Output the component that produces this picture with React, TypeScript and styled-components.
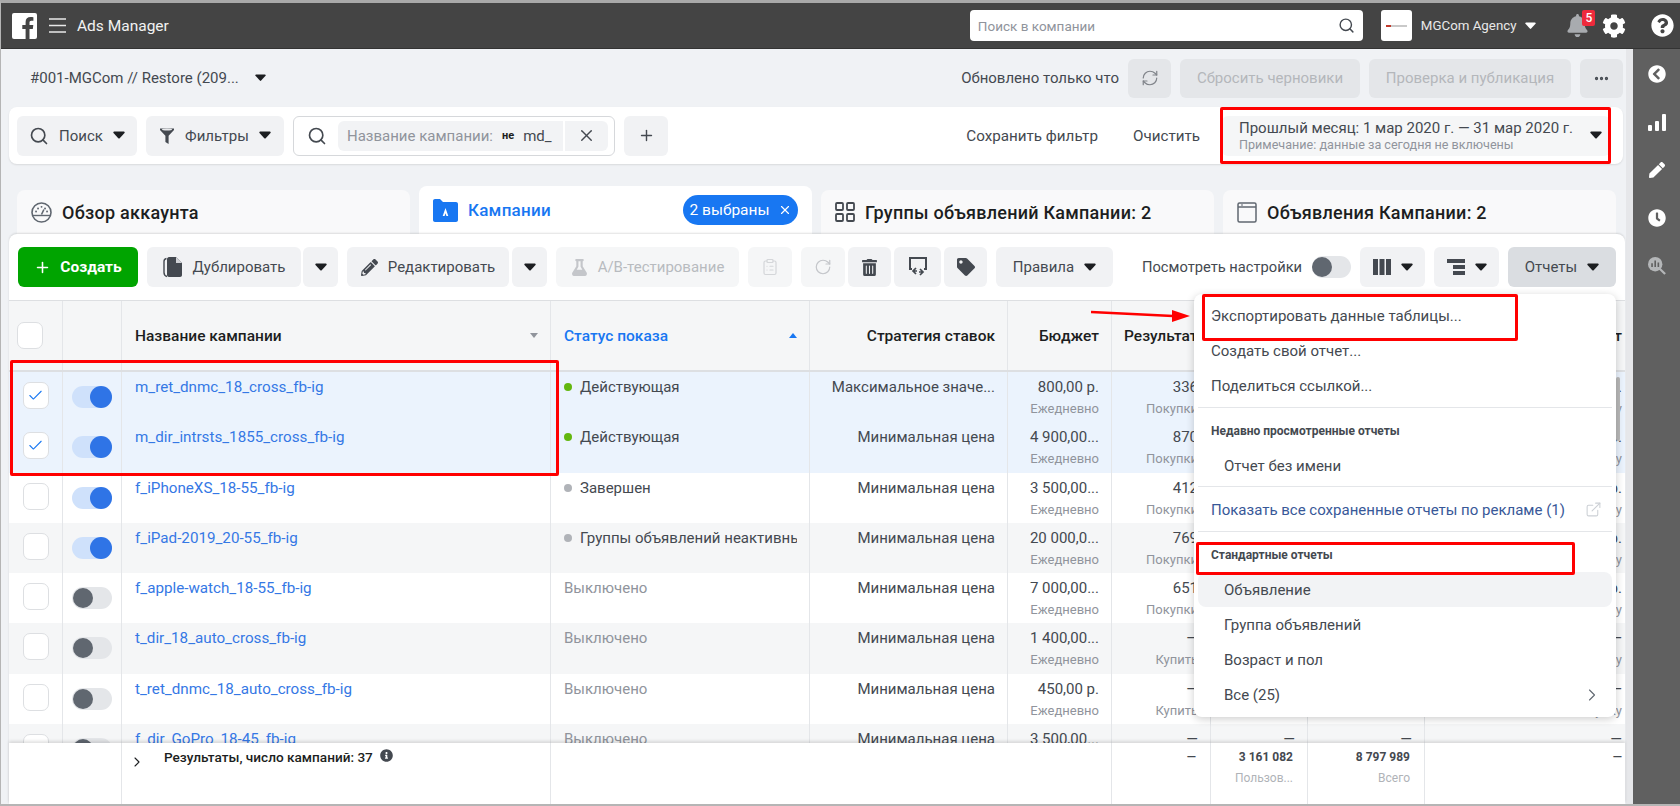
import React from 'react'
import styled, { createGlobalStyle } from 'styled-components'
import { FaBell, FaCog, FaQuestionCircle, FaChevronCircleLeft, FaPen, FaClock, FaTag, FaTrashAlt, FaFlask, FaInfoCircle, FaPencilAlt } from 'react-icons/fa'
import { Search, Plus, X, RefreshCw, RotateCw, ClipboardList, Check, ChevronRight, ExternalLink, Ellipsis } from 'lucide-react'

const GlobalStyle = createGlobalStyle`
    html, body {
        margin: 0;
        padding: 0;
        background: #f0f2f5;
    }
    * {
        box-sizing: border-box;
    }
    body {
        font-family: Roboto, "Noto Sans", sans-serif;
        font-size: 15px;
        color: #444950;
    }
`

const COLUMNS = '54px 59px 429px 259px 198px 104px 99px 97px 117px 200px'

type Row = {
    name: string
    status: string
    dot?: string
    strategy: string
    budget: string
    result: string
    resultSub: string
    selected?: boolean
    on?: boolean
    striped?: boolean
    reach: string
    shows: string
    cost: string
}

const rows: Row[] = [
    { name: 'm_ret_dnmc_18_cross_fb-ig', status: 'Действующая', dot: '#63b70f', strategy: 'Максимальное значе...', budget: '800,00 р.', result: '336', resultSub: 'Покупки', selected: true, on: true, reach: '142 310', shows: '402 118', cost: '92,10 р.' },
    { name: 'm_dir_intrsts_1855_cross_fb-ig', status: 'Действующая', dot: '#63b70f', strategy: 'Минимальная цена', budget: '4 900,00...', result: '870', resultSub: 'Покупки', selected: true, on: true, reach: '351 204', shows: '908 221', cost: '75,40 р.' },
    { name: 'f_iPhoneXS_18-55_fb-ig', status: 'Завершен', dot: '#b0b3b8', strategy: 'Минимальная цена', budget: '3 500,00...', result: '412', resultSub: 'Покупки', on: true, reach: '188 540', shows: '511 036', cost: '81,25 р.' },
    { name: 'f_iPad-2019_20-55_fb-ig', status: 'Группы объявлений неактивны', dot: '#b0b3b8', strategy: 'Минимальная цена', budget: '20 000,0...', result: '769', resultSub: 'Покупки', on: true, striped: true, reach: '240 917', shows: '733 402', cost: '64,80 р.' },
    { name: 'f_apple-watch_18-55_fb-ig', status: 'Выключено', strategy: 'Минимальная цена', budget: '7 000,00...', result: '651', resultSub: 'Покупки', reach: '97 330', shows: '285 640', cost: '70,15 р.' },
    { name: 't_dir_18_auto_cross_fb-ig', status: 'Выключено', strategy: 'Минимальная цена', budget: '1 400,00...', result: '—', resultSub: 'Купить', striped: true, reach: '—', shows: '—', cost: '—' },
    { name: 't_ret_dnmc_18_auto_cross_fb-ig', status: 'Выключено', strategy: 'Минимальная цена', budget: '450,00 р.', result: '—', resultSub: 'Купить', reach: '—', shows: '—', cost: '—' },
    { name: 'f_dir_GoPro_18-45_fb-ig', status: 'Выключено', strategy: 'Минимальная цена', budget: '3 500,00...', result: '—', resultSub: 'Купить', striped: true, reach: '—', shows: '—', cost: '—' },
]

function Caret({ color = '#1c1e21', size = 12 }: { color?: string; size?: number }) {
    return (
        <svg width={size} height={size * 0.67} viewBox="0 0 12 8" style={{ flex: 'none' }}>
            <path d="M1.2 0.5h9.6c.8 0 1.2.9.7 1.5L6.7 7.2c-.4.4-1 .4-1.4 0L.5 2C0 1.4.4.5 1.2.5z" fill={color} />
        </svg>
    )
}

function FbLogo() {
    return (
        <svg width="25" height="26" viewBox="0 0 25 26">
            <rect width="25" height="26" rx="2" fill="#fff" />
            <path d="M17.5 26V16h3.3l.5-3.9h-3.8V9.7c0-1.1.4-1.9 1.9-1.9h2V4.3c-.4 0-1.6-.2-2.9-.2-2.9 0-4.9 1.8-4.9 5v3h-3.3V16h3.3v10z" fill="#444" />
        </svg>
    )
}

function Burger() {
    return (
        <svg width="17" height="15" viewBox="0 0 17 15">
            <path d="M0 1h17M0 7.5h17M0 14h17" stroke="#e8e8e8" strokeWidth="1.5" />
        </svg>
    )
}

function Funnel() {
    return (
        <svg width="16" height="18" viewBox="0 0 16 18">
            <path d="M1 1.5h14v1.6L9.6 8.8V17l-3.2-2V8.8L1 3.1z" fill="#444950" />
            <ellipse cx="8" cy="2.6" rx="5" ry="1" fill="#e8e9eb" />
        </svg>
    )
}

function GaugeIcon() {
    return (
        <svg width="21" height="21" viewBox="0 0 21 21" fill="none">
            <circle cx="10.5" cy="10.5" r="9.5" stroke="#606770" strokeWidth="1.6" />
            <path d="M1.5 13.5h18" stroke="#606770" strokeWidth="1.4" />
            <path d="M10.5 12.5l2.4-5" stroke="#606770" strokeWidth="1.6" />
            <path d="M5 9.500h.1M7 6.500h.1M10.500 4.800h.1M14 6.500h.1M16 9.500h.1" stroke="#606770" strokeWidth="1.8" strokeLinecap="round" />
        </svg>
    )
}

function FolderIcon() {
    return (
        <svg width="25" height="23" viewBox="0 0 25 23">
            <path d="M0 2c0-1.100.9-2 2-2h5l3 3h13c1.100 0 2 .9 2 2v16c0 1.100-.9 2-2 2H2c-1.100 0-2-.9-2-2z" fill="#1877f2" />
            <path d="M12.500 9l2.800 8h-1.900l-.9-2.800-.9 2.800H9.700z" fill="#fff" />
        </svg>
    )
}

function GroupsIcon() {
    return (
        <svg width="20" height="20" viewBox="0 0 20 20" fill="none" stroke="#444950" strokeWidth="1.800">
            <rect x="1" y="1" width="7" height="7" rx="1" />
            <rect x="12" y="1" width="7" height="7" rx="1" />
            <rect x="1" y="12" width="7" height="7" rx="1" />
            <rect x="12" y="12" width="7" height="7" rx="1" />
        </svg>
    )
}

function AdIcon() {
    return (
        <svg width="20" height="21" viewBox="0 0 20 21" fill="none" stroke="#606770" strokeWidth="1.500">
            <rect x="1" y="1" width="18" height="19" rx="1.500" />
            <path d="M1 5h18" />
            <path d="M4 3h2" strokeWidth="1" />
        </svg>
    )
}

function CopyIcon() {
    return (
        <svg width="20" height="22" viewBox="0 0 20 22">
            <path d="M3.500 2.500C1.500 3 1 4 1 5.500v11c0 2 1 3.500 3 4" fill="none" stroke="#444950" strokeWidth="1.400" />
            <path d="M6 1h7l6 6v12c0 1-.8 2-2 2H6c-1 0-2-1-2-2V3c0-1 1-2 2-2z" fill="#444950" />
            <path d="M13 1v6h6" fill="#d0d2d6" />
        </svg>
    )
}

function SwapIcon() {
    return (
        <svg width="20" height="22" viewBox="0 0 20 22" fill="none" stroke="#444950" strokeWidth="2">
            <path d="M4 13H2V2h16v11h-2" />
            <path d="M8 12l-3 3 3 3M5 15h4M12 13l3 3-3 3M15 16h-4" strokeWidth="1.700" />
        </svg>
    )
}

function ColumnsIcon() {
    return (
        <svg width="18" height="18" viewBox="0 0 18 18" fill="#444950">
            <rect x="0" y="1" width="5" height="16" />
            <rect x="6.500" y="1" width="5" height="16" />
            <rect x="13" y="1" width="5" height="16" />
        </svg>
    )
}

function BreakdownIcon() {
    return (
        <svg width="18" height="18" viewBox="0 0 18 18" fill="#444950">
            <rect x="0" y="1" width="18" height="4" />
            <rect x="6" y="7" width="12" height="4" />
            <rect x="6" y="13" width="12" height="4" />
        </svg>
    )
}

function BarsIcon() {
    return (
        <svg width="18" height="17" viewBox="0 0 18 17" fill="#fff">
            <rect x="0" y="11" width="4" height="6" rx="1" />
            <rect x="7" y="7" width="4" height="10" rx="1" />
            <rect x="14" y="0" width="4" height="17" rx="1" />
        </svg>
    )
}

function ReportSearchIcon() {
    return (
        <svg width="18" height="18" viewBox="0 0 20 20">
            <circle cx="8" cy="8" r="8" fill="#b4b6b8" />
            <path d="M4.500 7v4M8 4v7M11.500 6v5" stroke="#606060" strokeWidth="1.800" />
            <path d="M13 13l6 6" stroke="#b4b6b8" strokeWidth="2.400" />
        </svg>
    )
}

function RedArrow() {
    return (
        <svg width="100" height="14" viewBox="0 0 100 14">
            <path d="M0 2l82 4" stroke="#f00" strokeWidth="2.500" />
            <path d="M81 0l18 6-18 6z" fill="#f00" />
        </svg>
    )
}

export default function App() {
    return (
        <Window>
            <GlobalStyle />
            <TopBar>
                <FbLogo />
                <BurgerWrap>
                    <Burger />
                </BurgerWrap>
                <AppTitle>Ads Manager</AppTitle>
                <CompanySearch>
                    <span>Поиск в компании</span>
                    <Search size={17} color="#444950" strokeWidth={2} />
                </CompanySearch>
                <AgencyLogo>
                    <i />
                </AgencyLogo>
                <AgencyName>MGCom Agency</AgencyName>
                <Caret color="#fff" size={11} />
                <BellWrap>
                    <FaBell size={23} color="#a8abaf" />
                    <Badge>5</Badge>
                </BellWrap>
                <FaCog size={24} color="#fff" />
                <HelpWrap>
                    <FaQuestionCircle size={23} color="#fff" />
                </HelpWrap>
            </TopBar>

            <Body>
                <Workspace>
                    <AccountRow>
                        <AccountName>#001-MGCom // Restore (209...</AccountName>
                        <Caret size={11} />
                        <AccountActions>
                            <UpdatedText>Обновлено только что</UpdatedText>
                            <DisabledButton $w={43}>
                                <RefreshCw size={18} color="#80848a" strokeWidth={1.6} />
                            </DisabledButton>
                            <DisabledButton $w={180}>Сбросить черновики</DisabledButton>
                            <DisabledButton $w={202}>Проверка и публикация</DisabledButton>
                            <DisabledButton $w={43}>
                                <Ellipsis size={17} color="#444950" strokeWidth={2.6} />
                            </DisabledButton>
                        </AccountActions>
                    </AccountRow>

                    <FilterCard>
                        <ToolButton $w={120}>
                            <Search size={20} color="#444950" strokeWidth={2} />
                            Поиск
                            <Caret />
                        </ToolButton>
                        <ToolButton $w={138}>
                            <Funnel />
                            Фильтры
                            <Caret />
                        </ToolButton>
                        <FilterInput>
                            <Search size={20} color="#444950" strokeWidth={2} />
                            <Token>
                                <TokenLabel>Название кампании:</TokenLabel>
                                <TokenOp>не</TokenOp>
                                <TokenValue>md_</TokenValue>
                            </Token>
                            <TokenClose>
                                <X size={19} color="#444950" strokeWidth={1.8} />
                            </TokenClose>
                        </FilterInput>
                        <ToolButton $w={44}>
                            <Plus size={17} color="#444950" strokeWidth={2} />
                        </ToolButton>
                        <FilterLinks>
                            <span>Сохранить фильтр</span>
                            <span>Очистить</span>
                        </FilterLinks>
                        <DateBox>
                            <div>
                                <DateMain>Прошлый месяц: 1 мар 2020 г. — 31 мар 2020 г.</DateMain>
                                <DateNote>Примечание: данные за сегодня не включены</DateNote>
                            </div>
                            <Caret />
                        </DateBox>
                    </FilterCard>

                    <Tabs>
                        <Tab>
                            <GaugeIcon />
                            Обзор аккаунта
                        </Tab>
                        <Tab $active>
                            <FolderIcon />
                            Кампании
                            <Chip>
                                2 выбраны
                                <X size={14} color="#fff" strokeWidth={2} />
                            </Chip>
                        </Tab>
                        <Tab>
                            <GroupsIcon />
                            Группы объявлений Кампании: 2
                        </Tab>
                        <Tab>
                            <AdIcon />
                            Объявления Кампании: 2
                        </Tab>
                    </Tabs>

                    <MainCard>
                        <Toolbar>
                            <CreateButton>
                                <Plus size={17} color="#fff" strokeWidth={2.2} />
                                Создать
                            </CreateButton>
                            <JoinedGroup $gap={2}>
                                <ToolButton $w={154}>
                                    <CopyIcon />
                                    Дублировать
                                </ToolButton>
                                <ToolButton $w={35}>
                                    <Caret />
                                </ToolButton>
                            </JoinedGroup>
                            <JoinedGroup $gap={3}>
                                <ToolButton $w={162}>
                                    <FaPencilAlt size={17} color="#444950" />
                                    Редактировать
                                </ToolButton>
                                <ToolButton $w={35}>
                                    <Caret />
                                </ToolButton>
                            </JoinedGroup>
                            <ToolButton $w={183} $off>
                                <FaFlask size={17} color="#c4c6ca" />
                                A/B-тестирование
                            </ToolButton>
                            <ToolButton $w={44} $off>
                                <ClipboardList size={18} color="#d4d6d9" strokeWidth={1.6} />
                            </ToolButton>
                            <JoinedGroup $gap={3}>
                                <ToolButton $w={44} $off>
                                    <RotateCw size={18} color="#c4c6ca" strokeWidth={1.6} />
                                </ToolButton>
                                <ToolButton $w={43}>
                                    <FaTrashAlt size={17} color="#444950" />
                                </ToolButton>
                                <ToolButton $w={47}>
                                    <SwapIcon />
                                </ToolButton>
                                <ToolButton $w={43}>
                                    <FaTag size={18} color="#444950" />
                                </ToolButton>
                            </JoinedGroup>
                            <ToolButton $w={117}>
                                Правила
                                <Caret />
                            </ToolButton>
                            <ViewLabel>Посмотреть настройки</ViewLabel>
                            <ViewToggle>
                                <i />
                            </ViewToggle>
                            <ToolButton $w={65}>
                                <ColumnsIcon />
                                <Caret />
                            </ToolButton>
                            <ToolButton $w={65}>
                                <BreakdownIcon />
                                <Caret />
                            </ToolButton>
                            <ReportsButton>
                                Отчеты
                                <Caret />
                            </ReportsButton>
                        </Toolbar>

                        <TableHead>
                            <HeadCell $center>
                                <CheckBox />
                            </HeadCell>
                            <HeadCell />
                            <HeadCell $between>
                                Название кампании
                                <SortMark $color="#90949c" />
                            </HeadCell>
                            <HeadCell $between $blue>
                                Статус показа
                                <SortMark $color="#1877f2" $up />
                            </HeadCell>
                            <HeadCell $right>Стратегия ставок</HeadCell>
                            <HeadCell $right>Бюджет</HeadCell>
                            <HeadCell $right $flush>
                                Результаты
                            </HeadCell>
                            <HeadCell $right>Охват</HeadCell>
                            <HeadCell $right>Показы</HeadCell>
                            <HeadCell $right $last>
                                Цена за результат
                            </HeadCell>
                        </TableHead>

                        <TableBody>
                            {rows.map((row) => (
                                <TableRow key={row.name} $selected={row.selected} $striped={row.striped}>
                                    <Cell $center>
                                        <CheckBox>{row.selected && <Check size={17} color="#1877f2" strokeWidth={1.5} />}</CheckBox>
                                    </Cell>
                                    <Cell $center>
                                        <Toggle $on={row.on}>
                                            <i />
                                        </Toggle>
                                    </Cell>
                                    <Cell>
                                        <CampaignLink>{row.name}</CampaignLink>
                                    </Cell>
                                    <Cell>
                                        <StatusLine $muted={!row.dot}>
                                            {row.dot && <Dot $color={row.dot} />}
                                            {row.status}
                                        </StatusLine>
                                    </Cell>
                                    <Cell $right>
                                        <MainValue>{row.strategy}</MainValue>
                                    </Cell>
                                    <Cell $right>
                                        <MainValue>{row.budget}</MainValue>
                                        <SubValue>Ежедневно</SubValue>
                                    </Cell>
                                    <Cell $right>
                                        <MainValue>{row.result}</MainValue>
                                        <SubValue>{row.resultSub}</SubValue>
                                    </Cell>
                                    <Cell $right>
                                        <MainValue>{row.reach}</MainValue>
                                    </Cell>
                                    <Cell $right>
                                        <MainValue>{row.shows}</MainValue>
                                    </Cell>
                                    <Cell $right $last>
                                        <MainValue>{row.cost}</MainValue>
                                        <SubValue>За покупку</SubValue>
                                    </Cell>
                                </TableRow>
                            ))}
                            <ScrollThumb />
                        </TableBody>

                        <TableFoot>
                            <FootCell $span={2} />
                            <FootCell $summary>
                                <FootChevron>
                                    <ChevronRight size={16} color="#1c1e21" strokeWidth={1.6} />
                                </FootChevron>
                                <SummaryText>Результаты, число кампаний: 37</SummaryText>
                                <FaInfoCircle size={13} color="#444950" />
                            </FootCell>
                            <FootCell $span={3} />
                            <FootCell>
                                <FootValue>—</FootValue>
                            </FootCell>
                            <FootCell>
                                <FootValue>3 161 082</FootValue>
                                <FootSub>Пользов...</FootSub>
                            </FootCell>
                            <FootCell>
                                <FootValue>8 797 989</FootValue>
                                <FootSub>Всего</FootSub>
                            </FootCell>
                            <FootCell $last>
                                <FootValue>—</FootValue>
                            </FootCell>
                        </TableFoot>
                    </MainCard>
                </Workspace>

                <SideRail>
                    <RailSlot>
                        <FaChevronCircleLeft size={18} color="#fff" />
                    </RailSlot>
                    <RailSlot>
                        <BarsIcon />
                    </RailSlot>
                    <RailSlot>
                        <FaPen size={16} color="#fff" />
                    </RailSlot>
                    <RailSlot>
                        <FaClock size={18} color="#fff" />
                    </RailSlot>
                    <RailSlot>
                        <ReportSearchIcon />
                    </RailSlot>
                </SideRail>
            </Body>

            <ReportsMenu>
                <MenuItem>Экспортировать данные таблицы...</MenuItem>
                <MenuItem>Создать свой отчет...</MenuItem>
                <MenuItem>Поделиться ссылкой...</MenuItem>
                <MenuDivider />
                <MenuHeading>Недавно просмотренные отчеты</MenuHeading>
                <MenuItem $indent>Отчет без имени</MenuItem>
                <MenuDivider $tight />
                <MenuLink>
                    Показать все сохраненные отчеты по рекламе (1)
                    <ExternalLink size={17} color="#ccd0d5" strokeWidth={1.5} />
                </MenuLink>
                <MenuDivider />
                <MenuHeading>Стандартные отчеты</MenuHeading>
                <MenuItem $indent $hover>
                    Объявление
                </MenuItem>
                <MenuItem $indent>Группа объявлений</MenuItem>
                <MenuItem $indent>Возраст и пол</MenuItem>
                <MenuItem $indent $between>
                    Все (25)
                    <ChevronRight size={20} color="#606770" strokeWidth={1.3} />
                </MenuItem>
            </ReportsMenu>

            <RedBox $x={1220} $y={107} $w={391} $h={57} />
            <RedBox $x={10} $y={360} $w={549} $h={116} />
            <RedBox $x={1202} $y={294} $w={316} $h={47} />
            <RedBox $x={1196} $y={542} $w={379} $h={33} />
            <ArrowSpot>
                <RedArrow />
            </ArrowSpot>
        </Window>
    )
}

const Window = styled.div`
    position: relative;
    width: 1680px;
    height: 806px;
    overflow: hidden;
    display: flex;
    flex-direction: column;
    background: #f0f2f5;
    border-top: 3px solid #a9a9a9;
    border-left: 1px solid #b5b5b5;
    border-bottom: 2px solid #b5b5b5;
`

const TopBar = styled.header`
    flex: none;
    height: 46px;
    background: #444;
    border-bottom: 1px solid #333;
    display: flex;
    align-items: center;
    padding-left: 11px;
    color: #fff;
`

const BurgerWrap = styled.div`
    display: flex;
    margin-left: 12px;
`

const AppTitle = styled.div`
    margin-left: 11px;
    font-size: 15.5px;
    font-weight: 400;
    color: #f2f2f2;
`

const CompanySearch = styled.div`
    margin-left: 801px;
    width: 393px;
    height: 31px;
    background: #fff;
    border-radius: 4px;
    display: flex;
    align-items: center;
    justify-content: space-between;
    padding: 0 8px 0 8px;
    font-size: 13.5px;
    color: #90949c;
`

const AgencyLogo = styled.div`
    margin-left: 18px;
    width: 31px;
    height: 31px;
    background: #fff;
    border-radius: 3px;
    display: flex;
    align-items: center;
    justify-content: center;

    i {
        display: block;
        width: 21px;
        height: 2px;
        background: linear-gradient(90deg, #c0392b 0 22%, #c9c9c9 22%);
    }
`

const AgencyName = styled.div`
    margin: 0 9px;
    font-size: 13.3px;
    font-weight: 400;
    color: #e8e8e8;
`

const BellWrap = styled.div`
    position: relative;
    display: flex;
    margin: 0 13px 0 30px;
`

const Badge = styled.span`
    position: absolute;
    top: -4px;
    right: -6px;
    width: 13px;
    height: 16px;
    background: #ee2a3c;
    border-radius: 2px;
    color: #fff;
    font-size: 12px;
    font-weight: 500;
    text-align: center;
    line-height: 16px;
`

const HelpWrap = styled.div`
    display: flex;
    margin-left: 25px;
`

const Body = styled.div`
    flex: 1;
    min-height: 0;
    display: flex;
`

const Workspace = styled.main`
    width: 1632px;
    flex: none;
    display: flex;
    flex-direction: column;
    background: linear-gradient(90deg, #f0f2f5 1625px, #e6e7ea 1625px);
`

const AccountRow = styled.div`
    flex: none;
    height: 58px;
    display: flex;
    align-items: center;
    padding: 0 10px 0 29px;
    font-size: 15px;
`

const AccountName = styled.div`
    color: #444950;
    margin-right: 16px;
`

const AccountActions = styled.div`
    margin-left: auto;
    display: flex;
    align-items: center;
    gap: 9px;
`

const UpdatedText = styled.span`
    color: #444950;
`

const DisabledButton = styled.div<{ $w: number }>`
    width: ${(p) => p.$w}px;
    height: 39px;
    border-radius: 6px;
    background: #e4e6e9;
    color: #b4b7bb;
    display: flex;
    align-items: center;
    justify-content: center;
`

const FilterCard = styled.section`
    flex: none;
    width: 1614px;
    height: 57px;
    margin-left: 8px;
    background: #fff;
    border-radius: 8px;
    box-shadow: 0 1px 2px rgba(0, 0, 0, 0.1);
    display: flex;
    align-items: center;
    gap: 9px;
    padding: 0 13px 0 8px;
`

const ToolButton = styled.div<{ $w: number; $off?: boolean }>`
    flex: none;
    width: ${(p) => p.$w}px;
    height: 40px;
    border-radius: 6px;
    background: ${(p) => (p.$off ? '#f5f6f7' : '#f1f2f4')};
    color: ${(p) => (p.$off ? '#b8bbbf' : '#444950')};
    display: flex;
    align-items: center;
    justify-content: center;
    gap: 10px;
    font-size: 15px;
`

const FilterInput = styled.div`
    flex: none;
    width: 322px;
    height: 40px;
    border: 1px solid #d6d8db;
    border-radius: 6px;
    display: flex;
    align-items: center;
    padding: 0 5px 0 13px;
`

const Token = styled.div`
    margin-left: 11px;
    width: 225px;
    height: 30px;
    background: #f2f3f5;
    border-radius: 6px 0 0 6px;
    display: flex;
    align-items: center;
    padding-left: 9px;
`

const TokenLabel = styled.span`
    font-size: 15px;
    color: #90949c;
`

const TokenOp = styled.span`
    margin-left: 9px;
    font-size: 11px;
    font-weight: 700;
    color: #1c1e21;
`

const TokenValue = styled.span`
    margin-left: 9px;
    font-size: 15px;
    color: #444950;
`

const TokenClose = styled.div`
    margin-left: 2px;
    width: 43px;
    height: 30px;
    background: #f2f3f5;
    border-radius: 0 6px 6px 0;
    display: flex;
    align-items: center;
    justify-content: center;
`

const FilterLinks = styled.div`
    margin-left: auto;
    display: flex;
    gap: 35px;
    margin-right: 13px;
    font-size: 15.2px;
    color: #444950;
`

const DateBox = styled.div`
    flex: none;
    width: 388px;
    height: 40px;
    background: #f5f6f7;
    border-radius: 6px;
    display: flex;
    align-items: center;
    justify-content: space-between;
    padding: 0 8px 0 17px;
`

const DateMain = styled.div`
    font-size: 15px;
    line-height: 18px;
    color: #444950;
`

const DateNote = styled.div`
    font-size: 12.6px;
    line-height: 15px;
    color: #90949c;
`

const Tabs = styled.nav`
    flex: none;
    height: 70px;
    display: flex;
    align-items: flex-end;
    gap: 9px;
    padding-left: 16px;
`

const Tab = styled.div<{ $active?: boolean }>`
    flex: none;
    width: 393px;
    height: ${(p) => (p.$active ? 48 : 44)}px;
    background: ${(p) => (p.$active ? '#fff' : '#f9f9fa')};
    border-radius: 8px 8px 0 0;
    display: flex;
    align-items: center;
    gap: 10px;
    padding: 0 14px;
    font-size: ${(p) => (p.$active ? 17 : 18)}px;
    font-weight: 500;
    color: ${(p) => (p.$active ? '#1877f2' : '#1c1e21')};
    letter-spacing: 0.25px;
`

const Chip = styled.span`
    margin-left: auto;
    width: 115px;
    height: 30px;
    background: #1877f2;
    border-radius: 15px;
    display: flex;
    align-items: center;
    justify-content: center;
    gap: 8px;
    font-size: 15.5px;
    font-weight: 400;
    color: #fff;
    letter-spacing: 0;
`

const MainCard = styled.section`
    flex: 1;
    min-height: 0;
    width: 1616px;
    margin-left: 8px;
    background: #fff;
    border-radius: 8px 8px 0 0;
    box-shadow: 0 -1px 2px rgba(0, 0, 0, 0.12);
    display: flex;
    flex-direction: column;
    position: relative;
`

const Toolbar = styled.div`
    flex: none;
    height: 66px;
    display: flex;
    align-items: flex-start;
    gap: 9px;
    padding: 13px 0 0 9px;
`

const CreateButton = styled.div`
    flex: none;
    width: 120px;
    height: 40px;
    background: #00a400;
    border-radius: 6px;
    color: #fff;
    font-weight: 700;
    font-size: 15.5px;
    display: flex;
    align-items: center;
    justify-content: center;
    gap: 9px;
`

const JoinedGroup = styled.div<{ $gap: number }>`
    display: flex;
    gap: ${(p) => p.$gap}px;
`

const ViewLabel = styled.span`
    flex: none;
    width: 161px;
    margin-left: 20px;
    height: 40px;
    line-height: 40px;
    font-size: 14.7px;
    white-space: nowrap;
    color: #444950;
`

const ViewToggle = styled.div`
    flex: none;
    width: 39px;
    height: 22px;
    margin-top: 9px;
    border-radius: 11px;
    background: #e4e6e9;
    display: flex;
    align-items: center;

    i {
        display: block;
        width: 20px;
        height: 20px;
        border-radius: 50%;
        background: #606770;
    }
`

const ReportsButton = styled(ToolButton).attrs({ $w: 108 })`
    background: #dadde1;
`

const TableHead = styled.div`
    flex: none;
    display: grid;
    grid-template-columns: ${COLUMNS};
    height: 72px;
    background: #f5f6f7;
    border-top: 1px solid #dddfe2;
    border-bottom: 2px solid #dddfe2;
`

const HeadCell = styled.div<{ $center?: boolean; $between?: boolean; $right?: boolean; $blue?: boolean; $last?: boolean; $flush?: boolean }>`
    display: flex;
    align-items: center;
    justify-content: ${(p) => (p.$center ? 'center' : p.$between ? 'space-between' : p.$right ? 'flex-end' : 'flex-start')};
    padding: 0 ${(p) => (p.$flush ? 0 : p.$last ? 3 : 12)}px 0 ${(p) => (p.$center || p.$flush ? 0 : 13)}px;
    border-right: ${(p) => (p.$last ? 'none' : '1px solid #e4e6e9')};
    font-size: 15.5px;
    font-weight: 500;
    white-space: nowrap;
    overflow: hidden;
    color: ${(p) => (p.$blue ? '#1877f2' : '#1c1e21')};
`

const SortMark = styled.span<{ $color: string; $up?: boolean }>`
    width: 0;
    height: 0;
    border-left: 4px solid transparent;
    border-right: 4px solid transparent;
    ${(p) => (p.$up ? `border-bottom: 5px solid ${p.$color};` : `border-top: 5px solid ${p.$color};`)}
`

const TableBody = styled.div`
    flex: none;
    height: 371px;
    overflow: hidden;
    position: relative;
`

const TableRow = styled.div<{ $selected?: boolean; $striped?: boolean }>`
    display: grid;
    grid-template-columns: ${COLUMNS};
    height: 50.3px;
    background: ${(p) => (p.$selected ? '#ebf3fd' : p.$striped ? '#f5f6f7' : '#fff')};
`

const Cell = styled.div<{ $center?: boolean; $right?: boolean; $last?: boolean }>`
    min-width: 0;
    overflow: hidden;
    white-space: nowrap;
    display: flex;
    flex-direction: column;
    align-items: ${(p) => (p.$center ? 'center' : p.$right ? 'flex-end' : 'flex-start')};
    padding: ${(p) => (p.$center ? '10px 0 0' : `5px ${p.$last ? 3 : 12}px 0 13px`)};
    border-right: ${(p) => (p.$last ? 'none' : '1px solid #e4e6e9')};
`

const CheckBox = styled.div`
    width: 26px;
    height: 27px;
    background: #fff;
    border: 1px solid #dddfe2;
    border-radius: 7px;
    display: flex;
    align-items: center;
    justify-content: center;
`

const Toggle = styled.div<{ $on?: boolean }>`
    width: 40px;
    height: 22px;
    margin-top: 4px;
    border-radius: 11px;
    background: ${(p) => (p.$on ? '#cfe1fb' : '#e4e6e9')};
    display: flex;
    align-items: center;
    justify-content: ${(p) => (p.$on ? 'flex-end' : 'flex-start')};

    i {
        display: block;
        width: ${(p) => (p.$on ? 22 : 20)}px;
        height: ${(p) => (p.$on ? 22 : 20)}px;
        margin-left: ${(p) => (p.$on ? 0 : 1)}px;
        border-radius: 50%;
        background: ${(p) => (p.$on ? '#2f74e6' : '#606770')};
    }
`

const CampaignLink = styled.span`
    font-size: 15.2px;
    line-height: 20px;
    color: #3578e5;
`

const StatusLine = styled.div<{ $muted?: boolean }>`
    width: 100%;
    overflow: hidden;
    display: flex;
    align-items: center;
    gap: 8px;
    font-size: 15px;
    line-height: 20px;
    color: ${(p) => (p.$muted ? '#90949c' : '#444950')};
`

const Dot = styled.i<{ $color: string }>`
    flex: none;
    width: 8px;
    height: 8px;
    border-radius: 50%;
    background: ${(p) => p.$color};
`

const MainValue = styled.span`
    font-size: 15px;
    line-height: 20px;
    color: #444950;
`

const SubValue = styled.span`
    margin-top: 2px;
    font-size: 13px;
    line-height: 20px;
    color: #90949c;
`

const ScrollThumb = styled.div`
    position: absolute;
    top: 5px;
    right: 5px;
    width: 4px;
    height: 64px;
    border-radius: 2px;
    background: #b9b9b9;
`

const TableFoot = styled.div`
    flex: 1;
    min-height: 0;
    display: grid;
    grid-template-columns: ${COLUMNS};
    background: #fff;
    box-shadow: 0 -2px 3px rgba(0, 0, 0, 0.12);
    position: relative;
`

const FootCell = styled.div<{ $span?: number; $summary?: boolean; $last?: boolean }>`
    grid-column: span ${(p) => p.$span ?? 1};
    display: flex;
    flex-direction: ${(p) => (p.$summary ? 'row' : 'column')};
    align-items: ${(p) => (p.$summary ? 'flex-start' : 'flex-end')};
    gap: ${(p) => (p.$summary ? '5px' : '0')};
    padding: 5px ${(p) => (p.$last ? 3 : 14)}px 0 ${(p) => (p.$summary ? 7 : 0)}px;
    border-right: ${(p) => (p.$last ? 'none' : '1px solid #e4e6e9')};
    white-space: nowrap;

    svg:last-child:not(:first-child) {
        margin: 1px 0 0 2px;
    }
`

const FootChevron = styled.span`
    display: flex;
    margin-top: 6px;
`

const SummaryText = styled.span`
    margin-left: 14px;
    font-size: 13.6px;
    font-weight: 500;
    line-height: 18px;
    color: #1c1e21;
`

const FootValue = styled.span`
    font-size: 12px;
    font-weight: 700;
    line-height: 18px;
    color: #444950;
`

const FootSub = styled.span`
    margin-top: 2px;
    font-size: 12px;
    line-height: 20px;
    color: #b0b3b8;
`

const SideRail = styled.aside`
    flex: 1;
    background: #606060;
    display: flex;
    flex-direction: column;
    align-items: center;
    padding-top: 1px;
`

const RailSlot = styled.div`
    height: 48px;
    display: flex;
    align-items: center;
`

const ReportsMenu = styled.div`
    position: absolute;
    left: 1193px;
    top: 291px;
    width: 422px;
    background: #fff;
    border-radius: 8px;
    box-shadow: 0 2px 8px rgba(0, 0, 0, 0.2);
    padding: 4px 4px 5px;
`

const MenuItem = styled.div<{ $indent?: boolean; $hover?: boolean; $between?: boolean }>`
    height: 35px;
    display: flex;
    align-items: center;
    justify-content: ${(p) => (p.$between ? 'space-between' : 'flex-start')};
    padding: 0 10px 0 ${(p) => (p.$indent ? 26 : 13)}px;
    border-radius: 8px;
    background: ${(p) => (p.$hover ? '#f2f3f5' : 'transparent')};
    font-size: 15px;
    color: #444950;
`

const MenuDivider = styled.div<{ $tight?: boolean }>`
    height: 1px;
    margin: ${(p) => (p.$tight ? '3px 0 5px' : '4px 0 0')};
    background: #e4e6e9;
`

const MenuHeading = styled.div`
    height: 40px;
    padding: 15px 0 0 13px;
    font-size: 12px;
    line-height: 16px;
    font-weight: 700;
    color: #444950;
`

const MenuLink = styled(MenuItem)`
    justify-content: space-between;
    color: #385898;
`

const RedBox = styled.div<{ $x: number; $y: number; $w: number; $h: number }>`
    position: absolute;
    left: ${(p) => p.$x - 1}px;
    top: ${(p) => p.$y - 3}px;
    width: ${(p) => p.$w}px;
    height: ${(p) => p.$h}px;
    border: 3px solid #f00;
    border-radius: 2px;
    pointer-events: none;
`

const ArrowSpot = styled.div`
    position: absolute;
    left: 1090px;
    top: 307px;
    display: flex;
`
